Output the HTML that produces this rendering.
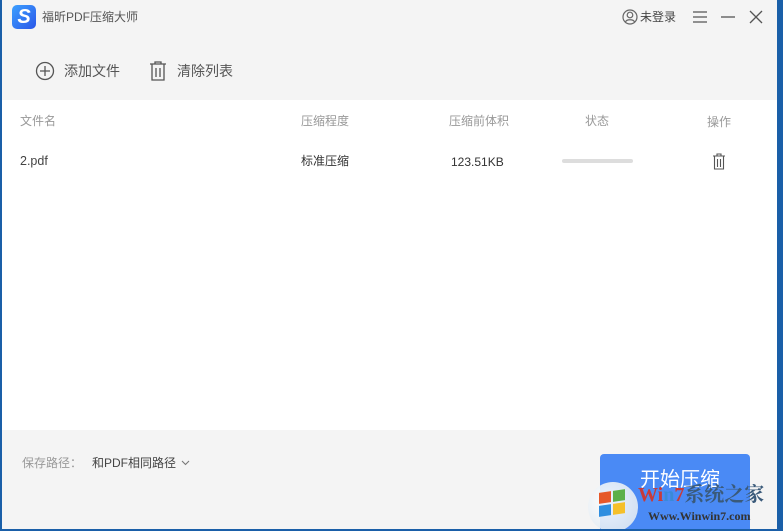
<!DOCTYPE html>
<html><head><meta charset="utf-8"><style>
*{margin:0;padding:0;box-sizing:border-box}
body{width:783px;height:531px;overflow:hidden;background:#1a5fa8;font-family:"Liberation Sans","Noto Sans CJK SC",sans-serif;position:relative}
.win{position:absolute;left:2px;top:0;width:775px;height:529px;background:#f4f4f4;overflow:hidden}
.t{position:absolute;white-space:nowrap;line-height:1}
.main{position:absolute;left:0;top:100px;width:775px;height:330px;background:#fff}
.hd{color:#999;font-size:12px}
</style></head><body>
<div class="win">
  <div style="position:absolute;left:10px;top:5px;width:24px;height:24px;border-radius:5px;background:linear-gradient(135deg,#3da0ff,#2a56e8)"><div style="color:#fff;font-weight:bold;font-style:italic;font-size:20px;text-align:center;line-height:24px">S</div></div>
  <div class="t" style="left:40px;top:11px;font-size:12px;color:#555">福昕PDF压缩大师</div>
  <svg style="position:absolute;left:620px;top:9px" width="16" height="16"><circle cx="8" cy="8" r="7" fill="none" stroke="#666" stroke-width="1.2"/><circle cx="8" cy="6" r="2.8" fill="none" stroke="#666" stroke-width="1.2"/><path d="M3.5 13c1-3 8-3 9 0" fill="none" stroke="#666" stroke-width="1.2"/></svg>
  <div class="t" style="left:638px;top:11px;font-size:12px;color:#444">未登录</div>
  <svg style="position:absolute;left:690px;top:10px" width="16" height="14"><path d="M1 2h14M1 7h14M1 12h14" stroke="#555" stroke-width="1.3"/></svg>
  <svg style="position:absolute;left:718px;top:10px" width="16" height="14"><path d="M1 7h14" stroke="#555" stroke-width="1.3"/></svg>
  <svg style="position:absolute;left:747px;top:10px" width="14" height="14"><path d="M1 1l12 12M13 1L1 13" stroke="#555" stroke-width="1.3"/></svg>
  <svg style="position:absolute;left:33px;top:61px" width="20" height="20"><circle cx="10" cy="10" r="8.5" fill="none" stroke="#555" stroke-width="1.3"/><path d="M10 5v10M5 10h10" stroke="#555" stroke-width="1.3"/></svg>
  <div class="t" style="left:62px;top:64px;font-size:14px;color:#555">添加文件</div>
  <svg style="position:absolute;left:147px;top:61px" width="18" height="20"><path d="M1 3h16M6 3V1h6v2M3 3v16h12V3M7 7v9M11 7v9" fill="none" stroke="#555" stroke-width="1.3"/></svg>
  <div class="t" style="left:175px;top:64px;font-size:14px;color:#555">清除列表</div>
  <div class="main">
    <div class="t hd" style="left:18px;top:15px">文件名</div>
    <div class="t hd" style="left:299px;top:15px">压缩程度</div>
    <div class="t hd" style="left:447px;top:15px">压缩前体积</div>
    <div class="t hd" style="left:583px;top:15px">状态</div>
    <div class="t hd" style="left:705px;top:16px">操作</div>
    <div class="t" style="left:18px;top:55px;font-size:12.5px;color:#444">2.pdf</div>
    <div class="t" style="left:299px;top:55px;font-size:12px;color:#333">标准压缩</div>
    <div class="t" style="left:449px;top:56px;font-size:12px;color:#333">123.51KB</div>
    <div style="position:absolute;left:560px;top:59px;width:71px;height:4px;border-radius:2px;background:#ddd"></div>
    <svg style="position:absolute;left:710px;top:53px" width="14" height="17"><path d="M1 3h12M5 3V1h4v2M2.5 3v13h9V3M5.5 6v8M8.5 6v8" fill="none" stroke="#555" stroke-width="1.1"/></svg>
  </div>
  <div class="t" style="left:20px;top:457px;font-size:12px;color:#999">保存路径：</div>
  <div class="t" style="left:90px;top:457px;font-size:12px;color:#444">和PDF相同路径</div>
  <svg style="position:absolute;left:179px;top:460px" width="9" height="6"><path d="M1 1l3.5 3.5L8 1" fill="none" stroke="#777" stroke-width="1.1"/></svg>
  <div style="position:absolute;left:598px;top:454px;width:150px;height:80px;border-radius:4px;background:#4a8af5"></div>
  <div class="t" style="left:638px;top:470px;font-size:20px;color:#fff">开始压缩</div>
  <div style="position:absolute;left:586px;top:482px;width:50px;height:50px;border-radius:50%;background:radial-gradient(circle at 40% 40%,#fff,#d8e4ee);opacity:.9"></div>
  <div style="position:absolute;left:597px;top:492px;width:12px;height:11px;background:#e6582a;transform:skewY(-8deg)"></div>
  <div style="position:absolute;left:611px;top:490px;width:12px;height:11px;background:#5bb04a;transform:skewY(-8deg)"></div>
  <div style="position:absolute;left:597px;top:505px;width:12px;height:11px;background:#2e8ee0;transform:skewY(-8deg)"></div>
  <div style="position:absolute;left:611px;top:503px;width:12px;height:11px;background:#f5c02a;transform:skewY(-8deg)"></div>
  <div class="t" style="left:636px;top:485px;font-size:20px;font-weight:bold;color:#c83a3a;font-family:'Liberation Serif','Noto Serif CJK SC',serif">Wi<span style="color:#3a8ad8">n</span>7<span style="color:#3a5a7a">系统之家</span></div>
  <div class="t" style="left:646px;top:510px;font-size:12px;font-weight:bold;color:#333;font-family:'Liberation Serif',serif">Www.Winwin7.com</div>
</div>
</body></html>
